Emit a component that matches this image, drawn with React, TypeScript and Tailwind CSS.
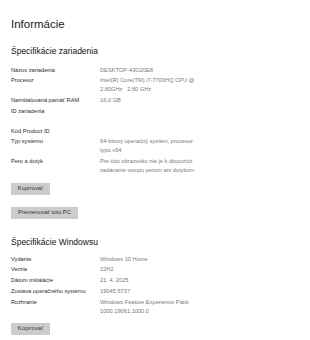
const deviceRows: { label: string; value: string[] }[] = [
  { label: 'Názov zariadenia', value: ['DESKTOP-43O20E8'] },
  { label: 'Procesor', value: ['Intel(R) Core(TM) i7-7700HQ CPU @', '2.80GHz   2.80 GHz'] },
  { label: 'Nainštalovaná pamäť RAM', value: ['16,0 GB'] },
  { label: 'ID zariadenia', value: ['', ''] },
  { label: 'Kód Product ID', value: [''] },
  { label: 'Typ systému', value: ['64-bitový operačný systém, procesor', 'typu x64'] },
  { label: 'Pero a dotyk', value: ['Pre túto obrazovku nie je k dispozícii', 'zadávanie vstupu perom ani dotykom'] },
]

const windowsRows: { label: string; value: string[] }[] = [
  { label: 'Vydanie', value: ['Windows 10 Home'] },
  { label: 'Verzia', value: ['22H2'] },
  { label: 'Dátum inštalácie', value: ['21. 4. 2025'] },
  { label: 'Zostava operačného systému', value: ['19045.5737'] },
  { label: 'Rozhranie', value: ['Windows Feature Experience Pack', '1000.19061.1000.0'] },
]

function SpecRows({ rows }: { rows: { label: string; value: string[] }[] }) {
  return (
    <div className="flex flex-col gap-[1.75px]">
      {rows.map((row) => (
        <div key={row.label} className="flex text-[5.7px] leading-[9px]">
          <div className="w-[89px] shrink-0 text-[#2b2b2b]">{row.label}</div>
          <div className="text-[#7a7a7a]">
            {row.value.map((line, i) => (
              <div key={i} className="h-[9px] whitespace-pre">
                {line}
              </div>
            ))}
          </div>
        </div>
      ))}
    </div>
  )
}

function GrayButton({ children, width }: { children: string; width: string }) {
  return (
    <button
      className={`${width} h-[12px] bg-[#cccccc] text-[5.8px] leading-none text-[#333333] flex items-center justify-center`}
    >
      {children}
    </button>
  )
}

export default function App() {
  return (
    <div
      className="w-[310px] h-[340px] bg-white pl-[11px] pt-[17px] overflow-hidden"
      style={{ fontFamily: '"Liberation Sans", Arial, sans-serif' }}
    >
      {/* Title */}
      <h1 className="text-[11.5px] leading-[14px] text-[#222222]">Informácie</h1>

      {/* Device specs */}
      <h2 className="mt-[15px] text-[8.5px] leading-[11px] text-[#111111]">Špecifikácie zariadenia</h2>
      <div className="mt-[8.5px]">
        <SpecRows rows={deviceRows} />
      </div>
      <div className="mt-[8px]">
        <GrayButton width="w-[39px]">Kopírovať</GrayButton>
      </div>
      <div className="mt-[12px]">
        <GrayButton width="w-[67px]">Premenovať toto PC</GrayButton>
      </div>

      {/* Windows specs */}
      <h2 className="mt-[18px] text-[8.5px] leading-[11px] text-[#111111]">Špecifikácie Windowsu</h2>
      <div className="mt-[6.5px]">
        <SpecRows rows={windowsRows} />
      </div>
      <div className="mt-[7px]">
        <GrayButton width="w-[39px]">Kopírovať</GrayButton>
      </div>
    </div>
  )
}
